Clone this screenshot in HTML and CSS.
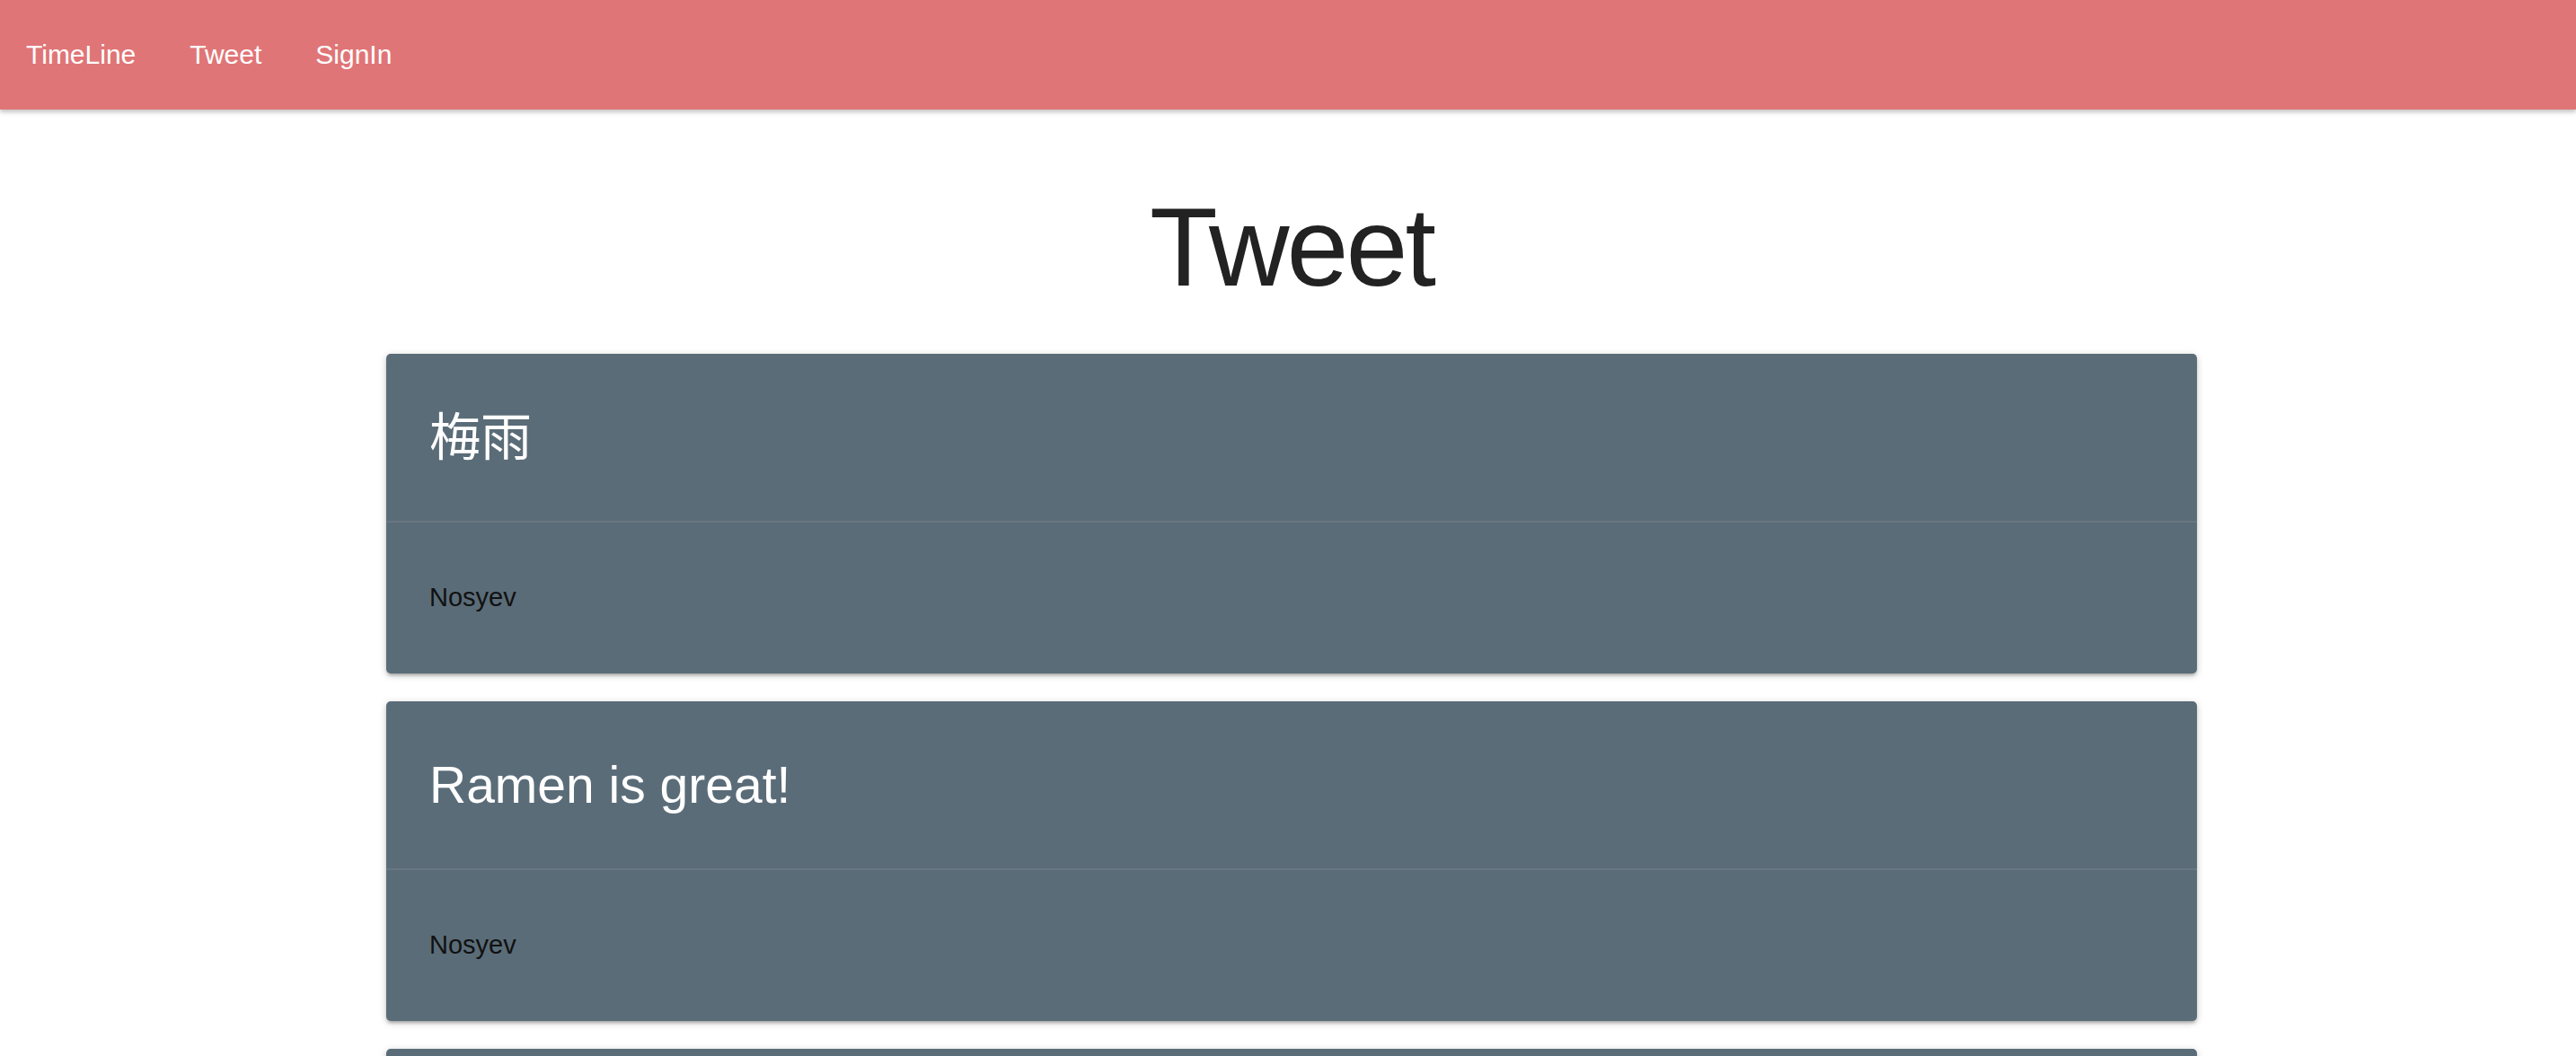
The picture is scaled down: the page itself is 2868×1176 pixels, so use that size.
FILE: index.html
```html
<!DOCTYPE html>
<html lang="ja">
<head>
    <meta charset="UTF-8">
    <meta name="viewport" content="width=device-width, initial-scale=1.0">
    <title>Tweet</title>
    <link rel="stylesheet" href="styles.css">
</head>
<body>
    <nav class="navbar">
        <a href="#">TimeLine</a>
        <a href="#">Tweet</a>
        <a href="#">SignIn</a>
    </nav>

    <div class="container">
        <h1 class="page-title">Tweet</h1>

        <div class="card">
            <div class="card-content">梅雨</div>
            <div class="card-action">Nosyev</div>
        </div>

        <div class="card">
            <div class="card-content">Ramen is great!</div>
            <div class="card-action">Nosyev</div>
        </div>

        <div class="card">
            <div class="card-content">おなかすいた</div>
            <div class="card-action">Nosyev</div>
        </div>
    </div>
</body>
</html>
```

FILE: styles.css
```css
body {
    font-family: "Liberation Sans", Arial, "Noto Sans CJK JP", sans-serif;
    background-color: #fff;
    margin: 0;
    padding: 0;
}
.navbar {
    display: flex;
    align-items: center;
    height: 122px;
    background-color: #e07577;
    box-shadow: 0 3px 4px rgba(0, 0, 0, 0.16), 0 2px 8px rgba(0, 0, 0, 0.1);
}
.navbar a {
    color: #fff;
    text-decoration: none;
    font-size: 30px;
    padding: 0 30px;
    line-height: 120px;
}
.navbar a:first-child {
    padding-left: 29px;
}
.container {
    width: 2016px;
    margin-left: 430px;
}
.page-title {
    margin: 0;
    padding: 88px 0 54px;
    text-align: center;
    font-size: 124px;
    font-weight: 400;
    line-height: 130px;
    color: #222;
    letter-spacing: -3px;
}
.card {
    background-color: #5a6c78;
    border-radius: 5px;
    margin-bottom: 31px;
    box-shadow: 0 3px 3px rgba(0, 0, 0, 0.14), 0 4px 2px -3px rgba(0, 0, 0, 0.12), 0 2px 8px rgba(0, 0, 0, 0.2);
}
.card-content {
    padding: 60px 48px;
    font-size: 57px;
    line-height: 66px;
    color: #fff;
}
.card-action {
    border-top: 2px solid rgba(160, 160, 160, 0.2);
    padding: 59px 48px 61px;
    font-size: 29px;
    line-height: 48px;
    color: #111;
}
```
